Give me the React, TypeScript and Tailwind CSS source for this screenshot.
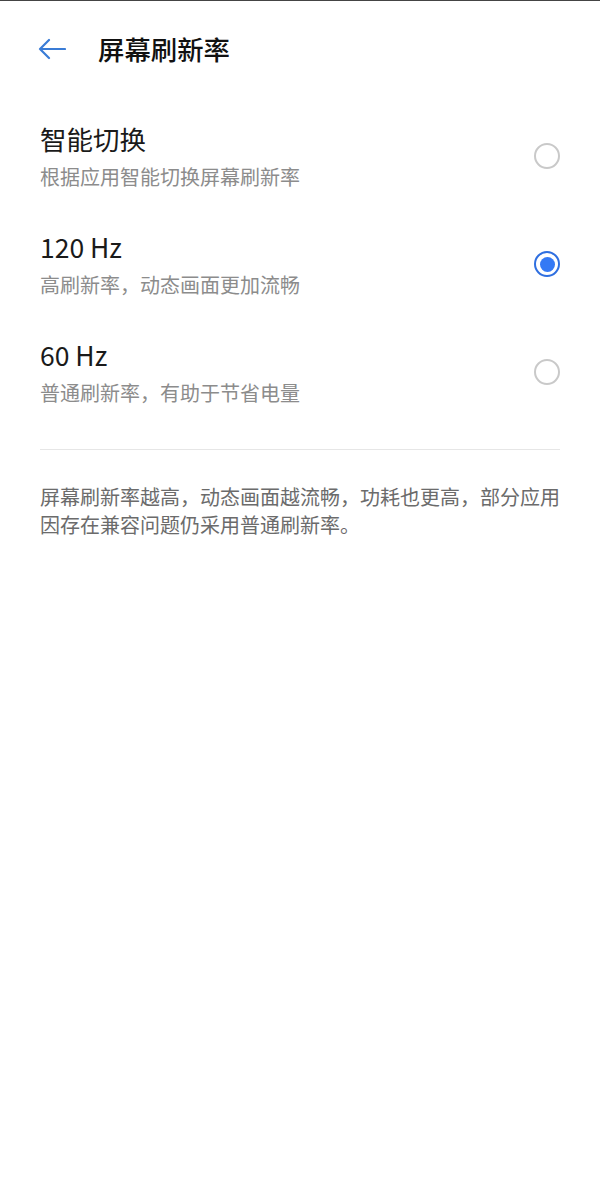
import React from "react";

const font = { fontFamily: '"Noto Sans CJK SC", "Noto Sans", sans-serif' };

function Radio({ checked }: { checked?: boolean }) {
  if (checked) {
    return (
      <div className="w-[26px] h-[26px] rounded-full border-[2.5px] border-[#2f6fe0] flex items-center justify-center shrink-0">
        <div className="w-[15px] h-[15px] rounded-full bg-[#3479f5]" />
      </div>
    );
  }
  return <div className="w-[26px] h-[26px] rounded-full border-2 border-[#c9c9c9] shrink-0" />;
}

function Row({ title, sub, checked }: { title: string; sub: string; checked?: boolean }) {
  return (
    <div className="flex items-center justify-between py-[19px]">
      <div className="flex flex-col">
        <div className="text-[26.5px] leading-[36px] text-[#1a1a1a]">{title}</div>
        <div className="mt-[6px] text-[20px] leading-[28px] text-[#8c8c8c]">{sub}</div>
      </div>
      <Radio checked={checked} />
    </div>
  );
}

export default function App() {
  return (
    <div className="w-[600px] h-[1190px] bg-white border-t border-[#444]" style={font}>
      <div className="h-[101px] flex items-start pt-[30px] pl-[38px]">
        <svg width="28" height="36" viewBox="0 0 28 36" className="shrink-0">
          <path d="M27 18 H2 M11 9 L2 18 L11 27" fill="none" stroke="#3a7cd6" strokeWidth="2.2" strokeLinecap="round" strokeLinejoin="round" />
        </svg>
        <div className="ml-[32px] text-[26.4px] leading-[36px] font-medium text-[#111]">屏幕刷新率</div>
      </div>
      <div className="px-[40px]">
        <Row title="智能切换" sub="根据应用智能切换屏幕刷新率" />
        <Row title="120 Hz" sub="高刷新率，动态画面更加流畅" checked />
        <Row title="60 Hz" sub="普通刷新率，有助于节省电量" />
        <div className="mt-[23px] h-px bg-[#e6e6e6]" />
        <div className="mt-[33px] text-[20px] leading-[28px] text-[#6b6b6b]">
          屏幕刷新率越高，动态画面越流畅，功耗也更高，部分应用因存在兼容问题仍采用普通刷新率。
        </div>
      </div>
    </div>
  );
}
